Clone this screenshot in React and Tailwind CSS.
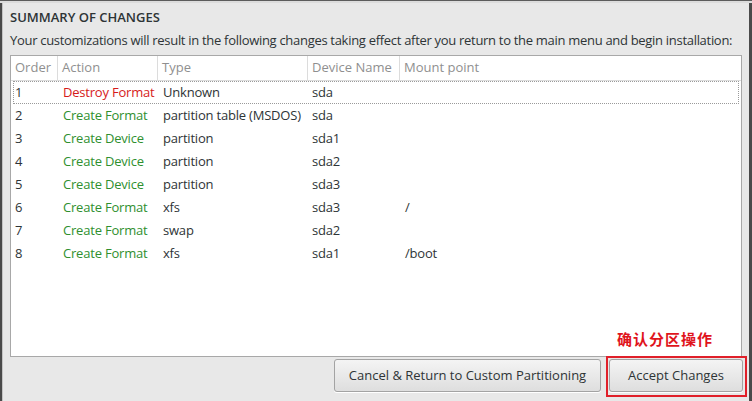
import React from 'react'

const cols = [
  { key: 'order', label: 'Order', w: 'w-[47px]' },
  { key: 'action', label: 'Action', w: 'w-[100px]' },
  { key: 'type', label: 'Type', w: 'w-[150px]' },
  { key: 'device', label: 'Device Name', w: 'w-[92px]' },
  { key: 'mount', label: 'Mount point', w: 'flex-1' },
]

const rows = [
  { order: '1', action: 'Destroy Format', type: 'Unknown', device: 'sda', mount: '', destroy: true },
  { order: '2', action: 'Create Format', type: 'partition table (MSDOS)', device: 'sda', mount: '' },
  { order: '3', action: 'Create Device', type: 'partition', device: 'sda1', mount: '' },
  { order: '4', action: 'Create Device', type: 'partition', device: 'sda2', mount: '' },
  { order: '5', action: 'Create Device', type: 'partition', device: 'sda3', mount: '' },
  { order: '6', action: 'Create Format', type: 'xfs', device: 'sda3', mount: '/' },
  { order: '7', action: 'Create Format', type: 'swap', device: 'sda2', mount: '' },
  { order: '8', action: 'Create Format', type: 'xfs', device: 'sda1', mount: '/boot' },
]

function Row({ row, focused }) {
  return (
    <div
      className={
        'mx-[2px] flex h-[23px] items-center tracking-[-0.2px] ' +
        (focused ? 'border border-dotted border-[#9a9a9a]' : 'border border-transparent')
      }
    >
      <div className="w-[45px] pl-[1px] text-[#2e3436]">{row.order}</div>
      <div className={'w-[100px] pl-[4px] ' + (row.destroy ? 'text-[#d61a1a]' : 'text-[#2f8f2f]')}>
        {row.action}
      </div>
      <div className="w-[150px] pl-[4px] text-[#2e3436]">{row.type}</div>
      <div className="w-[92px] pl-[3px] text-[#2e3436]">{row.device}</div>
      <div className="flex-1 pl-[4px] text-[#2e3436]">{row.mount}</div>
    </div>
  )
}

export default function App() {
  return (
    <div
      className="relative flex h-[401px] w-[752px] flex-col overflow-hidden bg-[#e8e8e8] text-[13px]"
      style={{ fontFamily: '"Open Sans", "Noto Sans", sans-serif' }}
    >
      {/* cut-off edge of the dialog above */}
      <div className="h-[3px] overflow-hidden border-t border-[#5c5c5c] bg-[#dcdcdc]" />

      <div className="flex flex-1 border-l-2 border-r-[3px] border-[#4a4a4a]">
        <div className="flex flex-1 flex-col border-l border-[#c4c4c4] pl-[7px] pr-[6px]">
          <h2 className="mt-[6px] text-[13px] font-semibold leading-[17px] text-[#2e3436]">
            SUMMARY OF CHANGES
          </h2>
          <p className="mt-[6px] whitespace-nowrap leading-[17px] tracking-[-0.3px] text-[#2e3436]">
            Your customizations will result in the following changes taking effect after you return to the main menu and begin installation:
          </p>

          <div className="mr-[1px] mt-[6px] flex h-[302px] flex-col border border-[#a8a8a8] bg-white">
            <div className="flex h-[25px] items-center border-b border-[#dcdcdc] text-[#8f8f8f]">
              {cols.map((c, i) => (
                <div
                  key={c.key}
                  className={
                    c.w +
                    ' flex h-full items-center px-[4px] ' +
                    (i < cols.length - 1 ? 'border-r border-[#dcdcdc]' : '')
                  }
                >
                  {c.label}
                </div>
              ))}
            </div>
            {rows.map((r, i) => (
              <Row key={r.order} row={r} focused={i === 0} />
            ))}
          </div>

          <div className="flex justify-end gap-[8px] pt-[2px]">
            <button className="h-[33px] w-[267px] rounded-[3px] border border-[#a3a3a3] bg-gradient-to-b from-[#f4f4f4] to-[#dedede] text-[#2e3436] shadow-[0_1px_0_#ffffff]">
              Cancel &amp; Return to Custom Partitioning
            </button>
            <button className="h-[33px] w-[134px] rounded-[3px] border border-[#a3a3a3] bg-gradient-to-b from-[#f4f4f4] to-[#dedede] text-[#2e3436] shadow-[0_1px_0_#ffffff]">
              Accept Changes
            </button>
          </div>
        </div>
      </div>

      {/* red annotation */}
      <div
        className="absolute left-[617px] top-[330px] text-[15px] font-bold leading-[18px] tracking-[1px] text-[#e0141c]"
        style={{ fontFamily: '"Noto Sans CJK SC", sans-serif' }}
      >
        确认分区操作
      </div>
      <div className="absolute left-[606px] top-[356px] h-[41px] w-[141px] border-2 border-[#e0202a]" />
    </div>
  )
}
